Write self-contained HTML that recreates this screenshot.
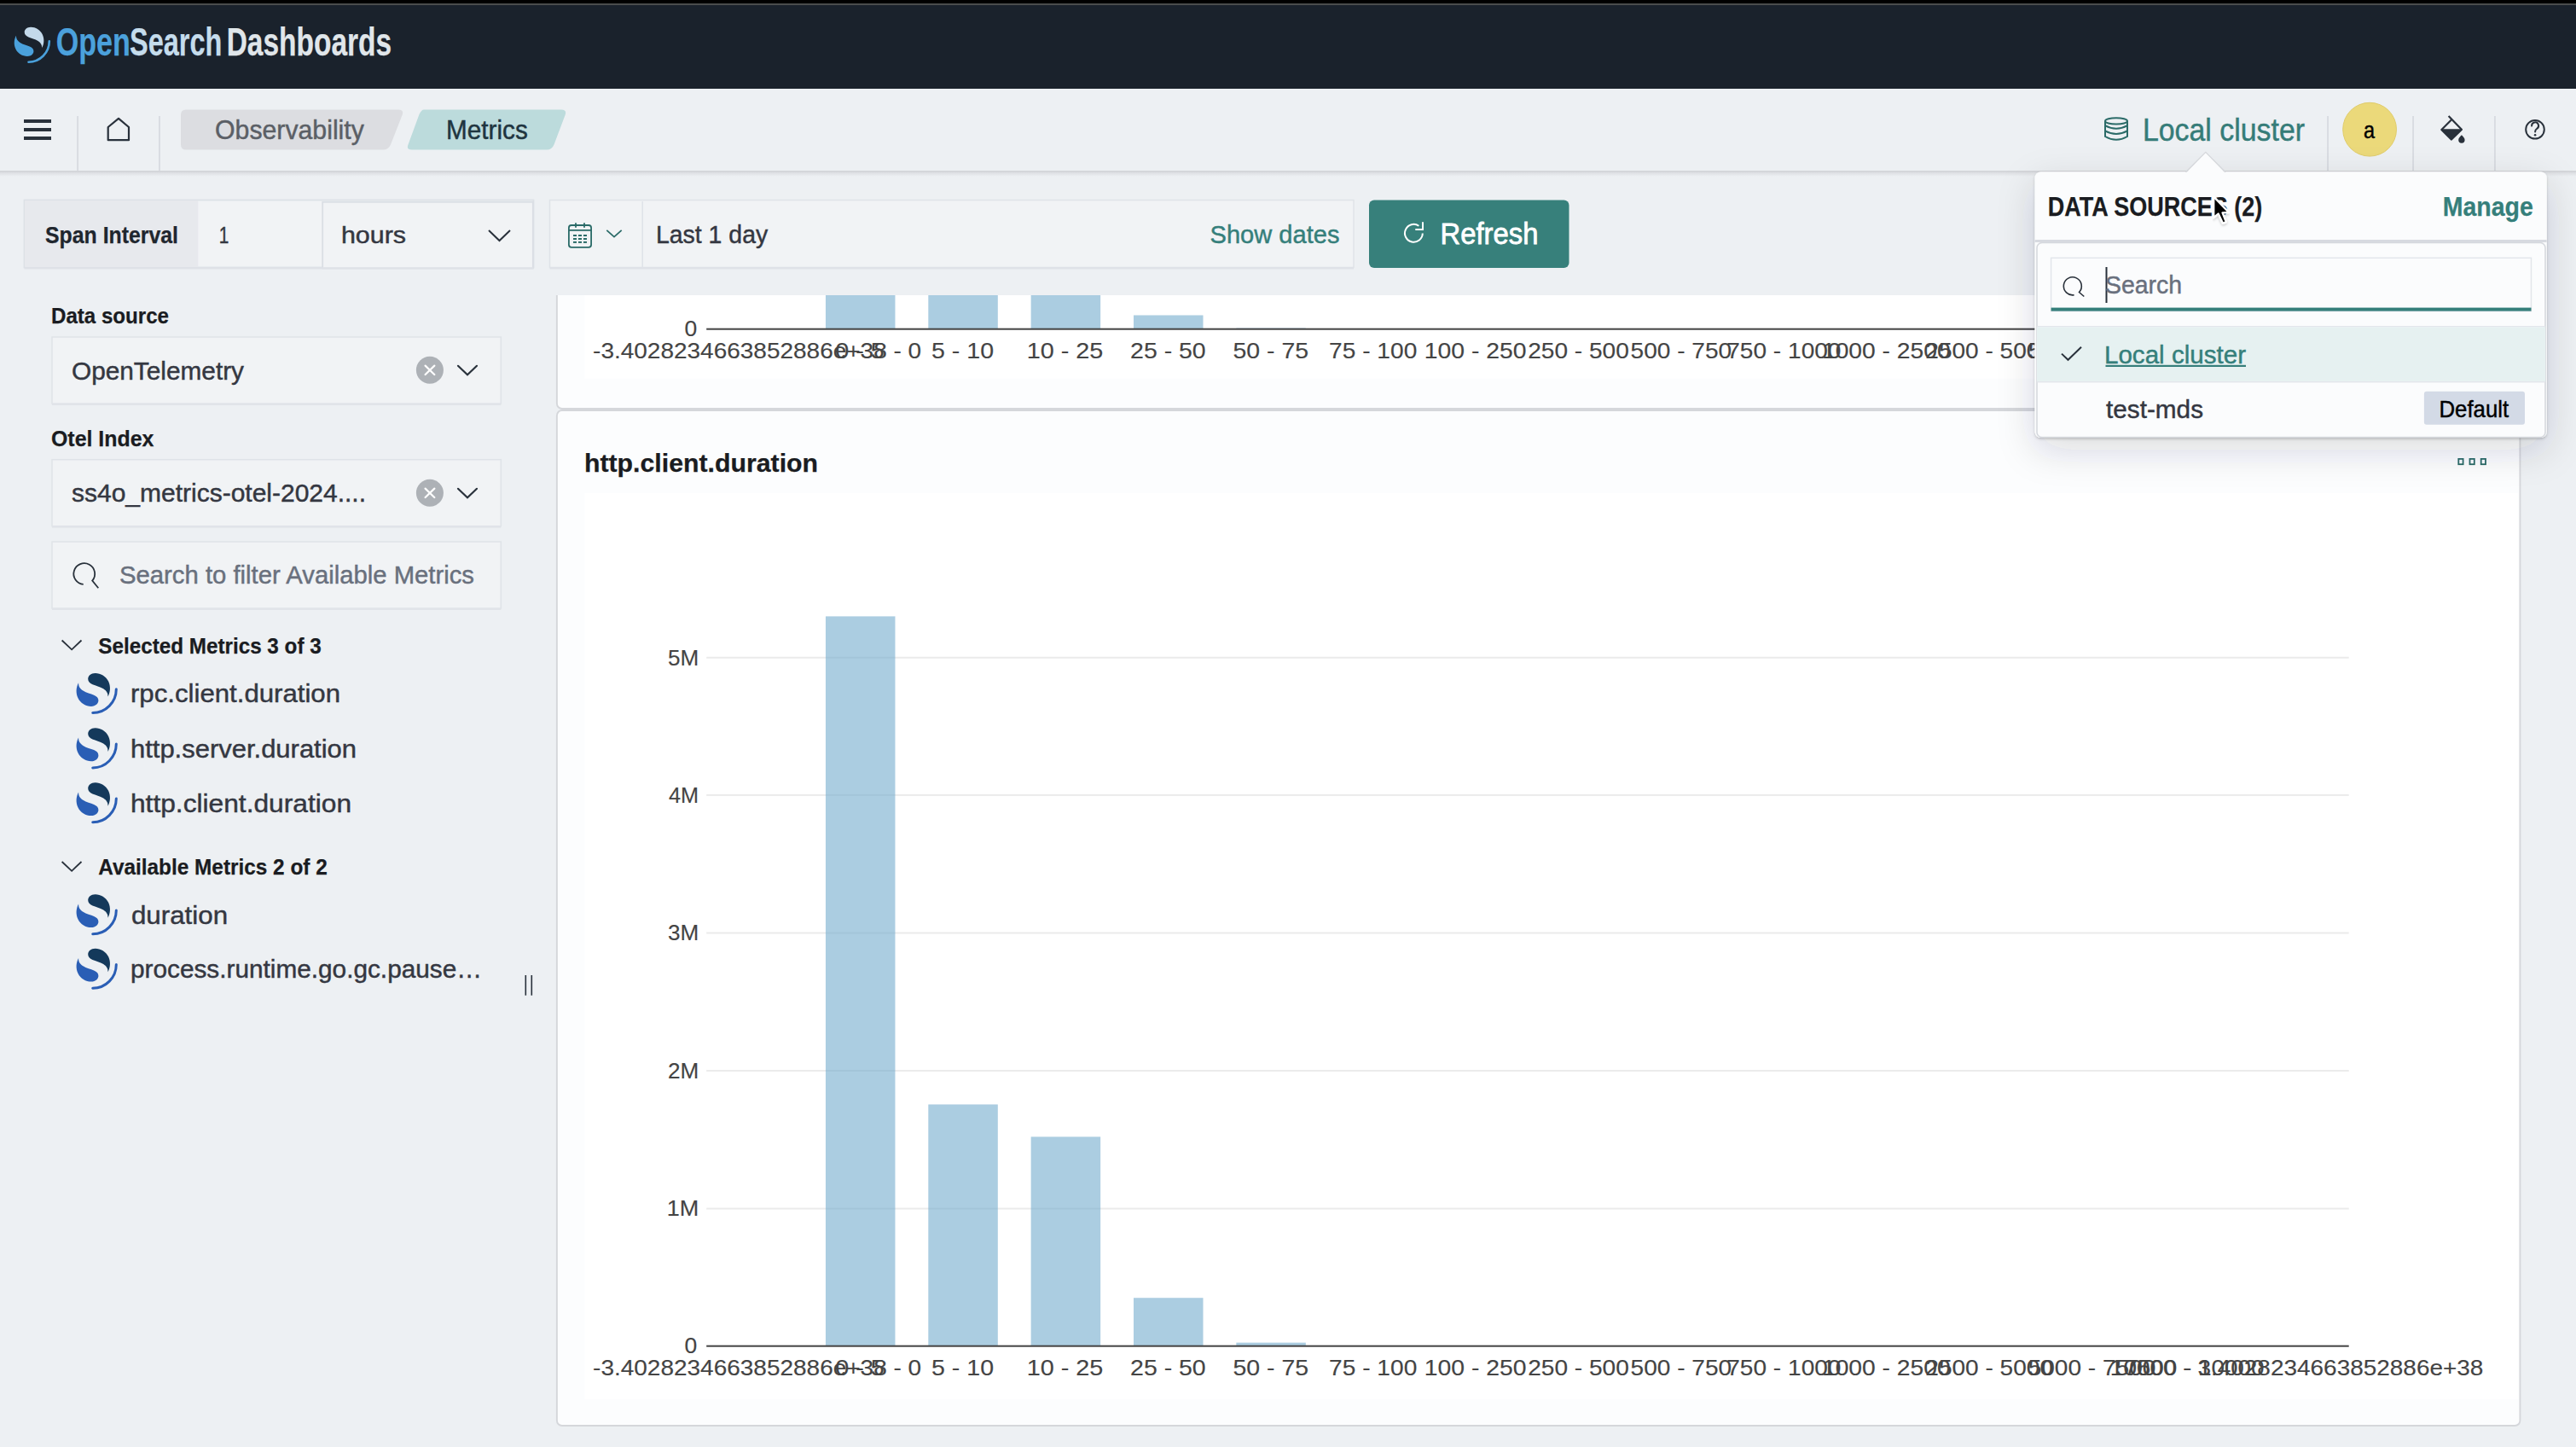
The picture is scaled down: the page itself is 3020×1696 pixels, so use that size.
<!DOCTYPE html><html><head><meta charset="utf-8"><title>Metrics - OpenSearch Dashboards</title><style>html,body{margin:0;padding:0;width:3020px;height:1696px;overflow:hidden;background:#edf0f3}svg text{font-family:"Liberation Sans", sans-serif}</style></head><body><svg width="3020" height="1696" viewBox="0 0 3020 1696" style="display:block"><rect x="0" y="0" width="3020" height="1696" fill="#edf0f3"/>
<rect x="0" y="0" width="3020" height="104" fill="#1a222c"/>
<rect x="0" y="0" width="3020" height="4" fill="#000000"/>
<rect x="0" y="4" width="3020" height="2" fill="#4a4c4c"/>
<g transform="translate(17,31.8) scale(0.879)"><path fill="#c3d9ea" d="M36.6,27.6 C39.6,22.5 40,15.5 37.2,9.6 C34.3,3.6 28,0 21.8,0 C16.6,0 13.3,3.2 13.3,6.8 C13.3,9.8 15.2,11.8 18.6,13.2 C22.3,14.8 27.4,15.8 31.3,18.3 C34.8,20.6 36.8,23.3 36.6,27.6 Z"/><path fill="#4aa1dc" transform="rotate(180 19.4 19.45)" d="M36.6,27.6 C39.6,22.5 40,15.5 37.2,9.6 C34.3,3.6 28,0 21.8,0 C16.6,0 13.3,3.2 13.3,6.8 C13.3,9.8 15.2,11.8 18.6,13.2 C22.3,14.8 27.4,15.8 31.3,18.3 C34.8,20.6 36.8,23.3 36.6,27.6 Z"/><path fill="none" stroke="#4aa1dc" stroke-width="3" stroke-linecap="round" d="M46.4,18.8 A27.8,27.8 0 0 1 18.8,46.6"/></g>
<text x="65.66" y="65.40" font-size="46.00" font-weight="bold" fill="#4ba1dc" stroke="#4ba1dc" stroke-width="0.25" textLength="87.11" lengthAdjust="spacingAndGlyphs">Open</text>
<text x="152.07" y="65.40" font-size="46.00" font-weight="bold" fill="#c5dcec" stroke="#c5dcec" stroke-width="0.25" textLength="108.29" lengthAdjust="spacingAndGlyphs">Search</text>
<text x="265.67" y="65.40" font-size="46.00" font-weight="bold" fill="#e0e6ea" stroke="#e0e6ea" stroke-width="0.25" textLength="193.45" lengthAdjust="spacingAndGlyphs">Dashboards</text>
<rect x="0" y="104" width="3020" height="96" fill="#edf0f3"/>
<defs><linearGradient id="hsh" x1="0" y1="0" x2="0" y2="1"><stop offset="0" stop-color="#dcdee2"/><stop offset="1" stop-color="#edf0f3"/></linearGradient></defs>
<rect x="0" y="202" width="3020" height="5" fill="url(#hsh)"/>
<rect x="0" y="200" width="3020" height="2" fill="#d4d6da"/>
<rect x="28" y="140" width="32" height="4" fill="#29313b"/>
<rect x="28" y="150" width="32" height="4" fill="#29313b"/>
<rect x="28" y="160" width="32" height="4" fill="#29313b"/>
<rect x="90.3" y="136" width="1.5" height="64" fill="#d3d6dc"/>
<path d="M126.7,149 L139,138.8 L151,149 L151,164.2 L126.7,164.2 Z" fill="none" stroke="#29313b" stroke-width="2.2" stroke-linejoin="round"/>
<rect x="186.2" y="136" width="1.5" height="64" fill="#d3d6dc"/>
<path d="M218,128.4 L467,128.4 Q474,128.4 471.5,135 L458,169.5 Q455.5,175.5 449,175.5 L218,175.5 Q212,175.5 212,169.5 L212,134.4 Q212,128.4 218,128.4 Z" fill="#dcdde1"/>
<text x="252.09" y="162.90" font-size="30.50" font-weight="normal" fill="#5b5f66" stroke="#5b5f66" stroke-width="0.45" textLength="174.80" lengthAdjust="spacingAndGlyphs">Observability</text>
<path d="M497,128.4 L658,128.4 Q665,128.4 662.5,135 L649.5,169.5 Q647,175.5 641,175.5 L483,175.5 Q476,175.5 478.5,169.5 L491.5,134 Q494,128.4 497,128.4 Z" fill="#bcdbdc"/>
<text x="523.03" y="162.90" font-size="30.50" font-weight="normal" fill="#1f3540" stroke="#1f3540" stroke-width="0.45" textLength="95.72" lengthAdjust="spacingAndGlyphs">Metrics</text>
<g fill="none" stroke="#2b6b68" stroke-width="2"><ellipse cx="2481" cy="141.9" rx="13" ry="3.7"/><path d="M2468,141.9 L2468,160 Q2481,167.5 2494,160 L2494,141.9"/><path d="M2468,147.2 Q2481,154.5 2494,147.2"/><path d="M2468,153.4 Q2481,160.7 2494,153.4"/></g>
<text x="2511.95" y="164.50" font-size="36.00" font-weight="normal" fill="#357c78" stroke="#357c78" stroke-width="0.45" textLength="190.05" lengthAdjust="spacingAndGlyphs">Local cluster</text>
<rect x="2728.3" y="136" width="1.5" height="64" fill="#d3d6dc"/>
<circle cx="2778.1" cy="151.7" r="31.4" fill="#ebd97a" stroke="#e0cc6c" stroke-width="1"/>
<text x="2770.91" y="162.30" font-size="28.30" font-weight="normal" fill="#000000" stroke="#000000" stroke-width="0.45" textLength="13.09" lengthAdjust="spacingAndGlyphs">a</text>
<rect x="2828.3" y="136" width="1.5" height="64" fill="#d3d6dc"/>
<g><path d="M2870.6,136.1 L2885.9,151.8 L2873.9,163.5 L2862.4,152 L2873.6,140.8" fill="none" stroke="#29313b" stroke-width="2.2" stroke-linejoin="round"/><path d="M2862.4,152 L2885.9,152 L2873.9,163.5 Z" fill="#29313b" stroke="#29313b" stroke-width="1.5" stroke-linejoin="round"/><path d="M2885.9,158.2 C2888,160.5 2889.6,162 2889.6,164 A3.7,3.7 0 0 1 2882.2,164 C2882.2,162 2883.8,160.5 2885.9,158.2 Z" fill="#29313b"/></g>
<rect x="2924.2" y="136" width="1.5" height="64" fill="#d3d6dc"/>
<circle cx="2972" cy="151.8" r="10.8" fill="none" stroke="#29313b" stroke-width="2"/>
<path d="M2968.1,147.6 A4,4 0 1 1 2974.2,150.8 C2972.6,151.9 2972.1,152.6 2972.1,154.6" fill="none" stroke="#29313b" stroke-width="2" stroke-linecap="round"/><circle cx="2972.1" cy="158.2" r="1.3" fill="#29313b"/>
<rect x="28.5" y="234.5" width="597" height="79" fill="#f1f3f5" stroke="#dde1e6" stroke-width="1.8"/>
<rect x="29.3" y="235.3" width="203" height="77.4" fill="#e7e9ed"/>
<rect x="378.2" y="236.8" width="246.6" height="77.6" fill="#f1f3f5" stroke="#dadee4" stroke-width="1.8"/>
<rect x="28.5" y="313.5" width="597" height="2" fill="#dfe2e7"/>
<text x="52.99" y="284.80" font-size="27.00" font-weight="bold" fill="#1f262e" stroke="#1f262e" stroke-width="0.25" textLength="156.03" lengthAdjust="spacingAndGlyphs">Span Interval</text>
<text x="256.71" y="284.80" font-size="27.00" font-weight="normal" fill="#343741" stroke="#343741" stroke-width="0.45" textLength="11.57" lengthAdjust="spacingAndGlyphs">1</text>
<text x="399.93" y="284.80" font-size="27.00" font-weight="normal" fill="#343741" stroke="#343741" stroke-width="0.45" textLength="76.09" lengthAdjust="spacingAndGlyphs">hours</text>
<path d="M573,270 L585.5,282 L598,270" fill="none" stroke="#29313b" stroke-width="2"/>
<rect x="644.5" y="234.5" width="942.5" height="79" fill="#f1f3f5" stroke="#dfe3e8" stroke-width="1.5"/>
<rect x="644.5" y="313.5" width="942.5" height="2" fill="#dfe2e7"/>
<rect x="752.5" y="236" width="1.5" height="77" fill="#dfe3e8"/>
<g fill="none" stroke="#2b6b68" stroke-width="1.8"><rect x="666.9" y="264" width="26.2" height="25.8" rx="3"/><path d="M667,269.9 L693,269.9 M675,261.2 L675,266.8 M685,261.2 L685,266.8"/></g>
<rect x="672" y="275" width="4" height="2" fill="#2b6b68"/>
<rect x="678" y="275" width="4" height="2" fill="#2b6b68"/>
<rect x="684" y="275" width="4" height="2" fill="#2b6b68"/>
<rect x="672" y="279" width="4" height="2" fill="#2b6b68"/>
<rect x="678" y="279" width="4" height="2" fill="#2b6b68"/>
<rect x="684" y="279" width="4" height="2" fill="#2b6b68"/>
<rect x="672" y="282.9" width="4" height="2" fill="#2b6b68"/>
<rect x="678" y="282.9" width="4" height="2" fill="#2b6b68"/>
<rect x="684" y="282.9" width="4" height="2" fill="#2b6b68"/>
<path d="M711.3,269.9 L720,277.6 L728.7,269.9" fill="none" stroke="#2b6b68" stroke-width="1.8"/>
<text x="768.98" y="285.00" font-size="30.00" font-weight="normal" fill="#343741" stroke="#343741" stroke-width="0.45" textLength="131.22" lengthAdjust="spacingAndGlyphs">Last 1 day</text>
<text x="1418.58" y="285.00" font-size="30.00" font-weight="normal" fill="#357f7b" stroke="#357f7b" stroke-width="0.45" textLength="151.84" lengthAdjust="spacingAndGlyphs">Show dates</text>
<rect x="1605" y="234.4" width="234.5" height="79.6" rx="6" fill="#37807b"/>
<path d="M1663.4,264.8 A10.4,10.4 0 1 0 1667.8,273.5" fill="none" stroke="#ffffff" stroke-width="2"/>
<path d="M1668,260.2 L1668,268.9 L1659.3,268.9" fill="none" stroke="#ffffff" stroke-width="2"/>
<text x="1688.62" y="286.40" font-size="35.00" font-weight="normal" fill="#ffffff" stroke="#ffffff" stroke-width="0.8" textLength="114.77" lengthAdjust="spacingAndGlyphs">Refresh</text>
<text x="59.99" y="379.20" font-size="26.50" font-weight="bold" fill="#1a1c21" stroke="#1a1c21" stroke-width="0.25" textLength="138.03" lengthAdjust="spacingAndGlyphs">Data source</text>
<rect x="61" y="395" width="526.3" height="78" fill="#f1f3f5" stroke="#dfe3e8" stroke-width="1.5"/>
<rect x="61" y="473" width="526.3" height="2" fill="#e1e4e9"/>
<text x="84.00" y="444.70" font-size="30.00" font-weight="normal" fill="#343741" stroke="#343741" stroke-width="0.45" textLength="202.00" lengthAdjust="spacingAndGlyphs">OpenTelemetry</text>
<circle cx="503.9" cy="433.8" r="16" fill="#adb1b6"/>
<path d="M498.6,428.6 L509.3,439.0 M509.3,428.6 L498.6,439.0" stroke="#ffffff" stroke-width="2.2" stroke-linecap="round"/>
<path d="M537,428.8 L548,439.2 L559,428.8" fill="none" stroke="#29313b" stroke-width="2.2" stroke-linecap="round"/>
<text x="59.99" y="523.00" font-size="26.50" font-weight="bold" fill="#1a1c21" stroke="#1a1c21" stroke-width="0.25" textLength="120.42" lengthAdjust="spacingAndGlyphs">Otel Index</text>
<rect x="61" y="538.7" width="526.3" height="78" fill="#f1f3f5" stroke="#dfe3e8" stroke-width="1.5"/>
<rect x="61" y="616.7" width="526.3" height="2" fill="#e1e4e9"/>
<text x="83.99" y="588.00" font-size="30.00" font-weight="normal" fill="#343741" stroke="#343741" stroke-width="0.45" textLength="345.03" lengthAdjust="spacingAndGlyphs">ss4o_metrics-otel-2024....</text>
<circle cx="503.9" cy="577.8" r="16" fill="#adb1b6"/>
<path d="M498.6,572.5999999999999 L509.3,583.0 M509.3,572.5999999999999 L498.6,583.0" stroke="#ffffff" stroke-width="2.2" stroke-linecap="round"/>
<path d="M537,572.8 L548,583.1999999999999 L559,572.8" fill="none" stroke="#29313b" stroke-width="2.2" stroke-linecap="round"/>
<rect x="61" y="635" width="526.3" height="78" fill="#f1f3f5" stroke="#dfe3e8" stroke-width="1.5"/>
<rect x="61" y="713" width="526.3" height="2" fill="#e1e4e9"/>
<path d="M97.7,684.9 A12.4,12.4 0 1 1 108.2,680.6 L115.3,689.2" fill="none" stroke="#29313b" stroke-width="1.8"/>
<text x="140.00" y="683.50" font-size="30.00" font-weight="normal" fill="#69707d" stroke="#69707d" stroke-width="0.45" textLength="416.01" lengthAdjust="spacingAndGlyphs">Search to filter Available Metrics</text>
<path d="M72.6,750.5 L84.1,761.3 L95.5,750.5" fill="none" stroke="#29313b" stroke-width="1.8"/>
<text x="115.29" y="766.00" font-size="26.50" font-weight="bold" fill="#1a1c21" stroke="#1a1c21" stroke-width="0.25" textLength="261.41" lengthAdjust="spacingAndGlyphs">Selected Metrics 3 of 3</text>
<g transform="translate(89.9,789.0) scale(1.0)"><path fill="#14395b" d="M36.6,27.6 C39.6,22.5 40,15.5 37.2,9.6 C34.3,3.6 28,0 21.8,0 C16.6,0 13.3,3.2 13.3,6.8 C13.3,9.8 15.2,11.8 18.6,13.2 C22.3,14.8 27.4,15.8 31.3,18.3 C34.8,20.6 36.8,23.3 36.6,27.6 Z"/><path fill="#2a5eb5" transform="rotate(180 19.4 19.45)" d="M36.6,27.6 C39.6,22.5 40,15.5 37.2,9.6 C34.3,3.6 28,0 21.8,0 C16.6,0 13.3,3.2 13.3,6.8 C13.3,9.8 15.2,11.8 18.6,13.2 C22.3,14.8 27.4,15.8 31.3,18.3 C34.8,20.6 36.8,23.3 36.6,27.6 Z"/><path fill="none" stroke="#2a5eb5" stroke-width="3" stroke-linecap="round" d="M46.4,18.8 A27.8,27.8 0 0 1 18.8,46.6"/></g>
<text x="152.97" y="823.30" font-size="30.00" font-weight="normal" fill="#343741" stroke="#343741" stroke-width="0.45" textLength="246.07" lengthAdjust="spacingAndGlyphs">rpc.client.duration</text>
<g transform="translate(89.9,853.3000000000001) scale(1.0)"><path fill="#14395b" d="M36.6,27.6 C39.6,22.5 40,15.5 37.2,9.6 C34.3,3.6 28,0 21.8,0 C16.6,0 13.3,3.2 13.3,6.8 C13.3,9.8 15.2,11.8 18.6,13.2 C22.3,14.8 27.4,15.8 31.3,18.3 C34.8,20.6 36.8,23.3 36.6,27.6 Z"/><path fill="#2a5eb5" transform="rotate(180 19.4 19.45)" d="M36.6,27.6 C39.6,22.5 40,15.5 37.2,9.6 C34.3,3.6 28,0 21.8,0 C16.6,0 13.3,3.2 13.3,6.8 C13.3,9.8 15.2,11.8 18.6,13.2 C22.3,14.8 27.4,15.8 31.3,18.3 C34.8,20.6 36.8,23.3 36.6,27.6 Z"/><path fill="none" stroke="#2a5eb5" stroke-width="3" stroke-linecap="round" d="M46.4,18.8 A27.8,27.8 0 0 1 18.8,46.6"/></g>
<text x="152.97" y="887.60" font-size="30.00" font-weight="normal" fill="#343741" stroke="#343741" stroke-width="0.45" textLength="265.06" lengthAdjust="spacingAndGlyphs">http.server.duration</text>
<g transform="translate(89.9,917.2) scale(1.0)"><path fill="#14395b" d="M36.6,27.6 C39.6,22.5 40,15.5 37.2,9.6 C34.3,3.6 28,0 21.8,0 C16.6,0 13.3,3.2 13.3,6.8 C13.3,9.8 15.2,11.8 18.6,13.2 C22.3,14.8 27.4,15.8 31.3,18.3 C34.8,20.6 36.8,23.3 36.6,27.6 Z"/><path fill="#2a5eb5" transform="rotate(180 19.4 19.45)" d="M36.6,27.6 C39.6,22.5 40,15.5 37.2,9.6 C34.3,3.6 28,0 21.8,0 C16.6,0 13.3,3.2 13.3,6.8 C13.3,9.8 15.2,11.8 18.6,13.2 C22.3,14.8 27.4,15.8 31.3,18.3 C34.8,20.6 36.8,23.3 36.6,27.6 Z"/><path fill="none" stroke="#2a5eb5" stroke-width="3" stroke-linecap="round" d="M46.4,18.8 A27.8,27.8 0 0 1 18.8,46.6"/></g>
<text x="152.97" y="951.50" font-size="30.00" font-weight="normal" fill="#343741" stroke="#343741" stroke-width="0.45" textLength="259.06" lengthAdjust="spacingAndGlyphs">http.client.duration</text>
<path d="M72.6,1010 L84.1,1020.8 L95.5,1010" fill="none" stroke="#29313b" stroke-width="1.8"/>
<text x="115.29" y="1025.00" font-size="26.50" font-weight="bold" fill="#1a1c21" stroke="#1a1c21" stroke-width="0.25" textLength="268.41" lengthAdjust="spacingAndGlyphs">Available Metrics 2 of 2</text>
<g transform="translate(89.9,1048.2) scale(1.0)"><path fill="#14395b" d="M36.6,27.6 C39.6,22.5 40,15.5 37.2,9.6 C34.3,3.6 28,0 21.8,0 C16.6,0 13.3,3.2 13.3,6.8 C13.3,9.8 15.2,11.8 18.6,13.2 C22.3,14.8 27.4,15.8 31.3,18.3 C34.8,20.6 36.8,23.3 36.6,27.6 Z"/><path fill="#2a5eb5" transform="rotate(180 19.4 19.45)" d="M36.6,27.6 C39.6,22.5 40,15.5 37.2,9.6 C34.3,3.6 28,0 21.8,0 C16.6,0 13.3,3.2 13.3,6.8 C13.3,9.8 15.2,11.8 18.6,13.2 C22.3,14.8 27.4,15.8 31.3,18.3 C34.8,20.6 36.8,23.3 36.6,27.6 Z"/><path fill="none" stroke="#2a5eb5" stroke-width="3" stroke-linecap="round" d="M46.4,18.8 A27.8,27.8 0 0 1 18.8,46.6"/></g>
<text x="153.97" y="1082.50" font-size="30.00" font-weight="normal" fill="#343741" stroke="#343741" stroke-width="0.45" textLength="113.08" lengthAdjust="spacingAndGlyphs">duration</text>
<g transform="translate(89.9,1111.7) scale(1.0)"><path fill="#14395b" d="M36.6,27.6 C39.6,22.5 40,15.5 37.2,9.6 C34.3,3.6 28,0 21.8,0 C16.6,0 13.3,3.2 13.3,6.8 C13.3,9.8 15.2,11.8 18.6,13.2 C22.3,14.8 27.4,15.8 31.3,18.3 C34.8,20.6 36.8,23.3 36.6,27.6 Z"/><path fill="#2a5eb5" transform="rotate(180 19.4 19.45)" d="M36.6,27.6 C39.6,22.5 40,15.5 37.2,9.6 C34.3,3.6 28,0 21.8,0 C16.6,0 13.3,3.2 13.3,6.8 C13.3,9.8 15.2,11.8 18.6,13.2 C22.3,14.8 27.4,15.8 31.3,18.3 C34.8,20.6 36.8,23.3 36.6,27.6 Z"/><path fill="none" stroke="#2a5eb5" stroke-width="3" stroke-linecap="round" d="M46.4,18.8 A27.8,27.8 0 0 1 18.8,46.6"/></g>
<text x="152.97" y="1146.00" font-size="30.00" font-weight="normal" fill="#343741" stroke="#343741" stroke-width="0.45" textLength="412.08" lengthAdjust="spacingAndGlyphs">process.runtime.go.gc.pause…</text>
<rect x="615.5" y="1143" width="1.6" height="23.7" fill="#29313b"/><rect x="622.5" y="1143" width="1.6" height="23.7" fill="#29313b"/>
<defs><clipPath id="scroll"><rect x="640" y="346" width="2380" height="1350"/></clipPath><filter id="sh" x="-5%" y="-5%" width="110%" height="120%"><feDropShadow dx="0" dy="2" stdDeviation="2" flood-color="#000" flood-opacity="0.12"/></filter><filter id="pop" x="-30%" y="-30%" width="160%" height="170%"><feDropShadow dx="0" dy="14" stdDeviation="22" flood-color="#2a3040" flood-opacity="0.16"/></filter><filter id="pop2" x="-5%" y="-5%" width="110%" height="120%"><feDropShadow dx="0" dy="1.5" stdDeviation="1.5" flood-color="#000" flood-opacity="0.22"/></filter></defs>
<g clip-path="url(#scroll)">
<rect x="652.9" y="200" width="2301.5" height="279" rx="6" fill="#fcfdfe" stroke="#d5d7db" stroke-width="1.9"/>
<rect x="685.4" y="300" width="2267" height="143.6" fill="#ffffff"/>
<rect x="652.9" y="481" width="2301.5" height="1190" rx="6" fill="#fcfdfe" stroke="#d5d7db" stroke-width="1.9"/>
<rect x="685.4" y="578" width="2267" height="1062" fill="#ffffff"/>
</g>
<text x="684.97" y="553.00" font-size="30.00" font-weight="bold" fill="#1a1c21" stroke="#1a1c21" stroke-width="0.25" textLength="274.06" lengthAdjust="spacingAndGlyphs">http.client.duration</text>
<rect x="2882.3" y="537.9" width="5.3" height="6.3" fill="none" stroke="#2b6b68" stroke-width="1.8"/>
<rect x="2895.5" y="537.9" width="5.3" height="6.3" fill="none" stroke="#2b6b68" stroke-width="1.8"/>
<rect x="2908.7000000000003" y="537.9" width="5.3" height="6.3" fill="none" stroke="#2b6b68" stroke-width="1.8"/>
<rect x="828.2" y="769.8" width="1925.4999999999998" height="2" fill="#ebebeb"/>
<rect x="828.2" y="930.9" width="1925.4999999999998" height="2" fill="#ebebeb"/>
<rect x="828.2" y="1092.5" width="1925.4999999999998" height="2" fill="#ebebeb"/>
<rect x="828.2" y="1254" width="1925.4999999999998" height="2" fill="#ebebeb"/>
<rect x="828.2" y="1415.6" width="1925.4999999999998" height="2" fill="#ebebeb"/>
<rect x="967.97" y="722.39" width="81.5" height="855.31" fill="#73accd" fill-opacity="0.6"/>
<rect x="1088.31" y="1294.48" width="81.5" height="283.22" fill="#73accd" fill-opacity="0.6"/>
<rect x="1208.65" y="1332.40" width="81.5" height="245.30" fill="#73accd" fill-opacity="0.6"/>
<rect x="1329.00" y="1521.22" width="81.5" height="56.48" fill="#73accd" fill-opacity="0.6"/>
<rect x="1449.34" y="1573.67" width="81.5" height="4.03" fill="#73accd" fill-opacity="0.6"/>
<rect x="828.2" y="1576.7" width="1925.4999999999998" height="2" fill="#444444"/>
<text x="782.90" y="779.50" font-size="25.30" font-weight="normal" fill="#444444" stroke="#444444" stroke-width="0.15" textLength="36.30" lengthAdjust="spacingAndGlyphs">5M</text>
<text x="784.00" y="940.60" font-size="25.30" font-weight="normal" fill="#444444" stroke="#444444" stroke-width="0.15" textLength="35.13" lengthAdjust="spacingAndGlyphs">4M</text>
<text x="782.90" y="1102.20" font-size="25.30" font-weight="normal" fill="#444444" stroke="#444444" stroke-width="0.15" textLength="36.30" lengthAdjust="spacingAndGlyphs">3M</text>
<text x="782.90" y="1263.70" font-size="25.30" font-weight="normal" fill="#444444" stroke="#444444" stroke-width="0.15" textLength="36.30" lengthAdjust="spacingAndGlyphs">2M</text>
<text x="781.72" y="1425.30" font-size="25.30" font-weight="normal" fill="#444444" stroke="#444444" stroke-width="0.15" textLength="37.55" lengthAdjust="spacingAndGlyphs">1M</text>
<text x="802.59" y="1586.40" font-size="25.30" font-weight="normal" fill="#444444" stroke="#444444" stroke-width="0.15" textLength="14.74" lengthAdjust="spacingAndGlyphs">0</text>
<g clip-path="url(#scroll)">
<rect x="967.97" y="140.39" width="81.5" height="245.31" fill="#73accd" fill-opacity="0.6"/>
<rect x="1088.31" y="304.47" width="81.5" height="81.23" fill="#73accd" fill-opacity="0.6"/>
<rect x="1208.65" y="315.35" width="81.5" height="70.35" fill="#73accd" fill-opacity="0.6"/>
<rect x="1329.00" y="369.50" width="81.5" height="16.20" fill="#73accd" fill-opacity="0.6"/>
<rect x="1449.34" y="384.54" width="81.5" height="1.16" fill="#73accd" fill-opacity="0.6"/>
<rect x="828.2" y="384.7" width="1925.4999999999998" height="2" fill="#444444"/>
</g>
<text x="802.59" y="394.30" font-size="25.30" font-weight="normal" fill="#444444" stroke="#444444" stroke-width="0.15" textLength="14.74" lengthAdjust="spacingAndGlyphs">0</text>
<text x="695.10" y="1611.60" font-size="25.30" font-weight="normal" fill="#444444" stroke="#444444" stroke-width="0.15" textLength="385.08" lengthAdjust="spacingAndGlyphs">-3.4028234663852886e+38 - 0</text>
<text x="695.10" y="420.00" font-size="25.30" font-weight="normal" fill="#444444" stroke="#444444" stroke-width="0.15" textLength="385.08" lengthAdjust="spacingAndGlyphs">-3.4028234663852886e+38 - 0</text>
<text x="979.30" y="1611.60" font-size="25.30" font-weight="normal" fill="#444444" stroke="#444444" stroke-width="0.15" textLength="57.59" lengthAdjust="spacingAndGlyphs">0 - 5</text>
<text x="979.30" y="420.00" font-size="25.30" font-weight="normal" fill="#444444" stroke="#444444" stroke-width="0.15" textLength="57.59" lengthAdjust="spacingAndGlyphs">0 - 5</text>
<text x="1092.01" y="1611.60" font-size="25.30" font-weight="normal" fill="#444444" stroke="#444444" stroke-width="0.15" textLength="73.12" lengthAdjust="spacingAndGlyphs">5 - 10</text>
<text x="1092.01" y="420.00" font-size="25.30" font-weight="normal" fill="#444444" stroke="#444444" stroke-width="0.15" textLength="73.12" lengthAdjust="spacingAndGlyphs">5 - 10</text>
<text x="1203.68" y="1611.60" font-size="25.30" font-weight="normal" fill="#444444" stroke="#444444" stroke-width="0.15" textLength="89.72" lengthAdjust="spacingAndGlyphs">10 - 25</text>
<text x="1203.68" y="420.00" font-size="25.30" font-weight="normal" fill="#444444" stroke="#444444" stroke-width="0.15" textLength="89.72" lengthAdjust="spacingAndGlyphs">10 - 25</text>
<text x="1325.07" y="1611.60" font-size="25.30" font-weight="normal" fill="#444444" stroke="#444444" stroke-width="0.15" textLength="88.65" lengthAdjust="spacingAndGlyphs">25 - 50</text>
<text x="1325.07" y="420.00" font-size="25.30" font-weight="normal" fill="#444444" stroke="#444444" stroke-width="0.15" textLength="88.65" lengthAdjust="spacingAndGlyphs">25 - 50</text>
<text x="1445.42" y="1611.60" font-size="25.30" font-weight="normal" fill="#444444" stroke="#444444" stroke-width="0.15" textLength="88.65" lengthAdjust="spacingAndGlyphs">50 - 75</text>
<text x="1445.42" y="420.00" font-size="25.30" font-weight="normal" fill="#444444" stroke="#444444" stroke-width="0.15" textLength="88.65" lengthAdjust="spacingAndGlyphs">50 - 75</text>
<text x="1558.14" y="1611.60" font-size="25.30" font-weight="normal" fill="#444444" stroke="#444444" stroke-width="0.15" textLength="103.14" lengthAdjust="spacingAndGlyphs">75 - 100</text>
<text x="1558.14" y="420.00" font-size="25.30" font-weight="normal" fill="#444444" stroke="#444444" stroke-width="0.15" textLength="103.14" lengthAdjust="spacingAndGlyphs">75 - 100</text>
<text x="1669.82" y="1611.60" font-size="25.30" font-weight="normal" fill="#444444" stroke="#444444" stroke-width="0.15" textLength="119.72" lengthAdjust="spacingAndGlyphs">100 - 250</text>
<text x="1669.82" y="420.00" font-size="25.30" font-weight="normal" fill="#444444" stroke="#444444" stroke-width="0.15" textLength="119.72" lengthAdjust="spacingAndGlyphs">100 - 250</text>
<text x="1791.19" y="1611.60" font-size="25.30" font-weight="normal" fill="#444444" stroke="#444444" stroke-width="0.15" textLength="118.68" lengthAdjust="spacingAndGlyphs">250 - 500</text>
<text x="1791.19" y="420.00" font-size="25.30" font-weight="normal" fill="#444444" stroke="#444444" stroke-width="0.15" textLength="118.68" lengthAdjust="spacingAndGlyphs">250 - 500</text>
<text x="1911.54" y="1611.60" font-size="25.30" font-weight="normal" fill="#444444" stroke="#444444" stroke-width="0.15" textLength="118.68" lengthAdjust="spacingAndGlyphs">500 - 750</text>
<text x="1911.54" y="420.00" font-size="25.30" font-weight="normal" fill="#444444" stroke="#444444" stroke-width="0.15" textLength="118.68" lengthAdjust="spacingAndGlyphs">500 - 750</text>
<text x="2024.25" y="1611.60" font-size="25.30" font-weight="normal" fill="#444444" stroke="#444444" stroke-width="0.15" textLength="134.21" lengthAdjust="spacingAndGlyphs">750 - 1000</text>
<text x="2024.25" y="420.00" font-size="25.30" font-weight="normal" fill="#444444" stroke="#444444" stroke-width="0.15" textLength="134.21" lengthAdjust="spacingAndGlyphs">750 - 1000</text>
<text x="2135.93" y="1611.60" font-size="25.30" font-weight="normal" fill="#444444" stroke="#444444" stroke-width="0.15" textLength="150.78" lengthAdjust="spacingAndGlyphs">1000 - 2500</text>
<text x="2135.93" y="420.00" font-size="25.30" font-weight="normal" fill="#444444" stroke="#444444" stroke-width="0.15" textLength="150.78" lengthAdjust="spacingAndGlyphs">1000 - 2500</text>
<text x="2257.30" y="1611.60" font-size="25.30" font-weight="normal" fill="#444444" stroke="#444444" stroke-width="0.15" textLength="149.74" lengthAdjust="spacingAndGlyphs">2500 - 5000</text>
<text x="2257.30" y="420.00" font-size="25.30" font-weight="normal" fill="#444444" stroke="#444444" stroke-width="0.15" textLength="149.74" lengthAdjust="spacingAndGlyphs">2500 - 5000</text>
<text x="2377.65" y="1611.60" font-size="25.30" font-weight="normal" fill="#444444" stroke="#444444" stroke-width="0.15" textLength="149.74" lengthAdjust="spacingAndGlyphs">5000 - 7500</text>
<text x="2377.65" y="420.00" font-size="25.30" font-weight="normal" fill="#444444" stroke="#444444" stroke-width="0.15" textLength="149.74" lengthAdjust="spacingAndGlyphs">5000 - 7500</text>
<text x="2490.37" y="1611.60" font-size="25.30" font-weight="normal" fill="#444444" stroke="#444444" stroke-width="0.15" textLength="164.25" lengthAdjust="spacingAndGlyphs">7500 - 10000</text>
<text x="2490.37" y="420.00" font-size="25.30" font-weight="normal" fill="#444444" stroke="#444444" stroke-width="0.15" textLength="164.25" lengthAdjust="spacingAndGlyphs">7500 - 10000</text>
<text x="2473.89" y="1611.60" font-size="25.30" font-weight="normal" fill="#444444" stroke="#444444" stroke-width="0.15" textLength="437.52" lengthAdjust="spacingAndGlyphs">10000 - 3.4028234663852886e+38</text>
<text x="2473.89" y="420.00" font-size="25.30" font-weight="normal" fill="#444444" stroke="#444444" stroke-width="0.15" textLength="437.52" lengthAdjust="spacingAndGlyphs">10000 - 3.4028234663852886e+38</text>
<rect x="2385.6" y="201.4" width="600.1" height="311.6" rx="7" fill="#fbfcfd" filter="url(#pop)"/>
<rect x="2385.6" y="201.4" width="600.1" height="311.6" rx="7" fill="#fbfcfd" filter="url(#pop2)"/>
<path d="M2563.6,202 L2585.8,178.5 L2608,202 Z" fill="#fbfcfd"/>
<path d="M2562.5,201.8 L2585.8,178.3 L2609,201.8" fill="none" stroke="#d6d8dc" stroke-width="1.3"/>
<rect x="2385.6" y="281" width="600" height="3" fill="#d7dae0"/>
<rect x="2388" y="284.5" width="596" height="228" rx="6" fill="#fbfcfd" stroke="#d6d9de" stroke-width="1.6"/>
<text x="2400.77" y="252.60" font-size="32.00" font-weight="bold" fill="#1a1c21" stroke="#1a1c21" stroke-width="0.25" textLength="251.44" lengthAdjust="spacingAndGlyphs">DATA SOURCES (2)</text>
<text x="2863.75" y="252.60" font-size="32.00" font-weight="bold" fill="#357f7b" stroke="#357f7b" stroke-width="0.25" textLength="106.06" lengthAdjust="spacingAndGlyphs">Manage</text>
<rect x="2404.6" y="302.3" width="562.9" height="62.3" fill="#fbfcfd" stroke="#e3e6eb" stroke-width="1.5"/>
<rect x="2404.6" y="360.6" width="562.9" height="4" fill="#357f7b"/>
<path d="M2431.6,345.7 A10.5,10.5 0 1 1 2437.5,342.5 L2443.3,347.5" fill="none" stroke="#29313b" stroke-width="1.6"/>
<rect x="2468.5" y="313" width="2" height="42" fill="#29313b"/>
<text x="2467.96" y="344.00" font-size="30.00" font-weight="normal" fill="#69707d" stroke="#69707d" stroke-width="0.45" textLength="90.11" lengthAdjust="spacingAndGlyphs">Search</text>
<rect x="2388" y="382" width="596" height="1.5" fill="#e3e6eb"/>
<rect x="2388" y="383.5" width="596" height="63.4" fill="#e6f1f1"/>
<rect x="2388" y="446.9" width="596" height="1.5" fill="#e3e6eb"/>
<path d="M2417,414.6 L2424.5,421.8 L2440,406.8" fill="none" stroke="#29313b" stroke-width="2"/>
<text x="2466.98" y="426.00" font-size="30.00" font-weight="normal" fill="#357f7b" stroke="#357f7b" stroke-width="0.45" textLength="166.02" lengthAdjust="spacingAndGlyphs">Local cluster</text>
<rect x="2468.5" y="427.8" width="164.5" height="2.2" fill="#357f7b"/>
<text x="2469.00" y="490.00" font-size="30.00" font-weight="normal" fill="#343741" stroke="#343741" stroke-width="0.45" textLength="114.01" lengthAdjust="spacingAndGlyphs">test-mds</text>
<rect x="2841.9" y="458.7" width="118.1" height="39.1" rx="3" fill="#d3dae6"/>
<text x="2859.44" y="488.50" font-size="28.00" font-weight="normal" fill="#000000" stroke="#000000" stroke-width="0.45" textLength="81.67" lengthAdjust="spacingAndGlyphs">Default</text>
<path d="M2595.2,230.3 L2595.2,255.2 L2600.6,250.6 L2606,261.8 L2609.8,260.1 L2605.6,249.4 L2613,249 Z" fill="#000" stroke="#fff" stroke-width="2.4" stroke-linejoin="round" filter="url(#pop2)"/></svg></body></html>
